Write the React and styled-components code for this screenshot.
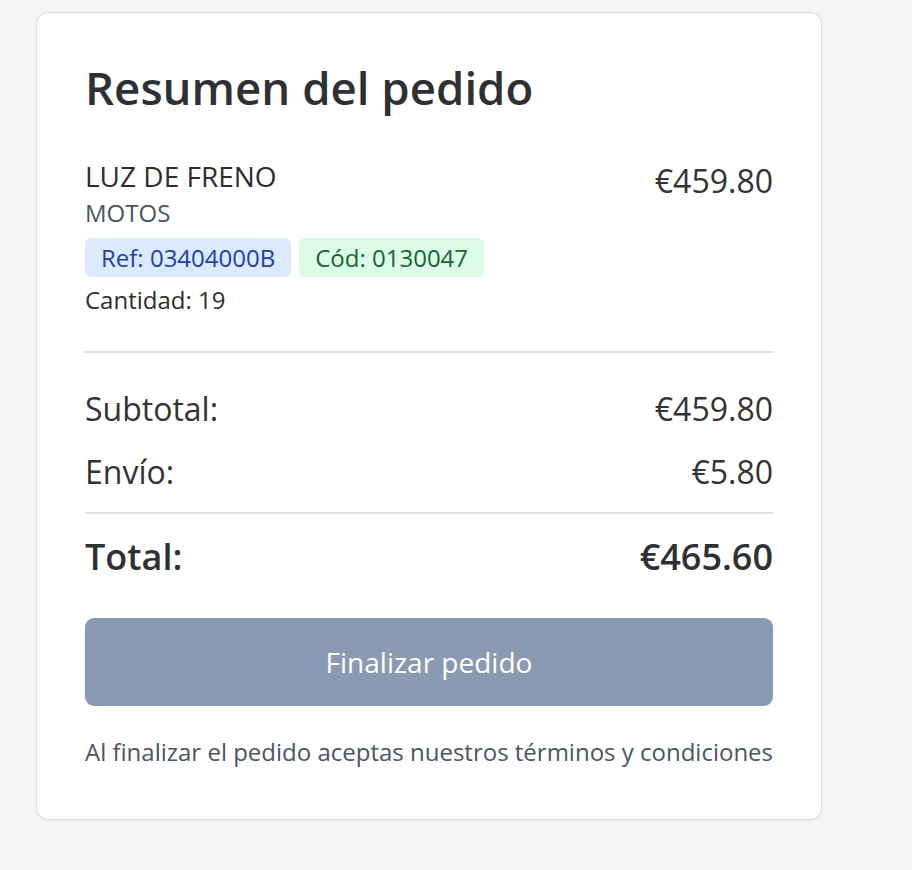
import React from "react";
import styled, { createGlobalStyle } from "styled-components";

const GlobalStyle = createGlobalStyle`
  * {
    box-sizing: border-box;
  }
  body {
    margin: 0;
    background: #f5f5f5;
    font-family: "Open Sans", "Noto Sans", sans-serif;
    color: #333;
  }
`;

const order = {
  item: {
    name: "LUZ DE FRENO",
    category: "MOTOS",
    ref: "03404000B",
    code: "0130047",
    quantity: 19,
    price: 459.8,
  },
  shipping: 5.8,
};

const euro = (n) => `€${n.toFixed(2)}`;

function App() {
  const { item, shipping } = order;
  const subtotal = item.price;
  const total = subtotal + shipping;

  return (
    <>
      <GlobalStyle />
      <Page>
        <Card>
          <Title>Resumen del pedido</Title>

          <ItemRow>
            <ItemInfo>
              <ItemName>{item.name}</ItemName>
              <ItemCategory>{item.category}</ItemCategory>
              <Badges>
                <Badge tone="blue">Ref: {item.ref}</Badge>
                <Badge tone="green">Cód: {item.code}</Badge>
              </Badges>
              <Quantity>Cantidad: {item.quantity}</Quantity>
            </ItemInfo>
            <ItemPrice>{euro(item.price)}</ItemPrice>
          </ItemRow>

          <Totals>
            <SummaryLine>
              <span>Subtotal:</span>
              <span>{euro(subtotal)}</span>
            </SummaryLine>
            <SummaryLine>
              <span>Envío:</span>
              <span>{euro(shipping)}</span>
            </SummaryLine>
          </Totals>

          <TotalLine>
            <span>Total:</span>
            <span>{euro(total)}</span>
          </TotalLine>

          <CheckoutButton type="button">Finalizar pedido</CheckoutButton>

          <Terms>
            Al finalizar el pedido aceptas nuestros términos y condiciones
          </Terms>
        </Card>
      </Page>
    </>
  );
}

const Page = styled.div`
  padding: 12px 0 40px 36px;
`;

const Card = styled.div`
  width: 786px;
  background: #fff;
  border: 1px solid #dcdcdc;
  border-radius: 12px;
  box-shadow: 0 1px 3px rgba(0, 0, 0, 0.06);
  padding: 47px 48px 51px;
`;

const Title = styled.h2`
  margin: 0 0 43px;
  font-size: 45.6px;
  font-weight: 600;
  line-height: 54px;
  color: #2f3034;
`;

const ItemRow = styled.div`
  display: flex;
  justify-content: space-between;
  align-items: flex-start;
  padding-bottom: 34px;
  border-bottom: 2px solid #e0e0e0;
`;

const ItemInfo = styled.div`
  display: flex;
  flex-direction: column;
  align-items: flex-start;
`;

const ItemName = styled.div`
  font-size: 28px;
  line-height: 39px;
  color: #2e2e2e;
`;

const ItemCategory = styled.div`
  font-size: 24px;
  line-height: 34px;
  color: #4b5563;
`;

const Badges = styled.div`
  display: flex;
  gap: 8px;
  margin: 8px 0 6px;
`;

const Badge = styled.span`
  font-size: 24px;
  line-height: 35px;
  padding: 2px 16px;
  border-radius: 6px;
  background: ${(p) => (p.tone === "green" ? "#dcfce7" : "#dbeafe")};
  color: ${(p) => (p.tone === "green" ? "#166534" : "#1e40af")};
`;

const Quantity = styled.div`
  font-size: 24px;
  line-height: 34px;
  color: #2e2e2e;
`;

const ItemPrice = styled.div`
  font-size: 32px;
  line-height: 48px;
  color: #333;
`;

const Totals = styled.div`
  display: flex;
  flex-direction: column;
  gap: 17px;
  padding: 33px 0 17px;
  border-bottom: 2px solid #e0e0e0;
`;

const SummaryLine = styled.div`
  display: flex;
  justify-content: space-between;
  font-size: 32px;
  line-height: 46px;
  color: #333;
`;

const TotalLine = styled.div`
  display: flex;
  justify-content: space-between;
  margin-top: 16px;
  font-size: 36px;
  font-weight: 600;
  line-height: 54px;
  color: #2f3034;
`;

const CheckoutButton = styled.button`
  display: block;
  width: 100%;
  height: 88px;
  margin-top: 34px;
  border: none;
  border-radius: 9px;
  background: #8a9ab3;
  color: #fff;
  font-family: inherit;
  font-size: 28px;
  cursor: not-allowed;
`;

const Terms = styled.p`
  margin: 30px 0 0;
  font-size: 24px;
  line-height: 32px;
  white-space: nowrap;
  text-align: center;
  color: #4b5563;
`;

export default App;
